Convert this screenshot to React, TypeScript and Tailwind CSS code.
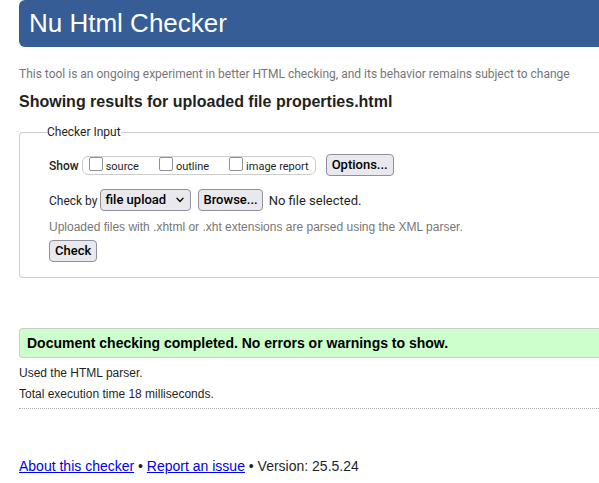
import { useRef, useState } from "react";

const control =
  "h-[22px] rounded-[4px] border border-[#8f8f9d] bg-[#e9e9ed] text-[13px] leading-5 font-medium text-black";

function ShowOption({ id, label }: { id: string; label: string }) {
  return (
    <label htmlFor={id} className="flex items-start gap-[3px] text-[11px]">
      <input
        id={id}
        type="checkbox"
        className="size-[14px] appearance-none rounded-[2px] border border-[#8f8f9d] bg-white checked:bg-[#0060df]"
      />
      <span className="pt-[1px]">{label}</span>
    </label>
  );
}

export default function App() {
  const fileInput = useRef<HTMLInputElement>(null);
  const [fileName, setFileName] = useState("No file selected.");

  return (
    <div className="bg-white pl-[19px] font-['Liberation_Sans',Arial,sans-serif] text-[#1f1f1f]">
      <header className="rounded-l-md bg-[#365d95] pt-[5px] pb-[6px] pl-[10px]">
        <h1 className="text-[26px] leading-9 text-white">Nu Html Checker</h1>
      </header>

      <p className="mt-[18px] font-[Roboto,sans-serif] text-[12px] leading-[18px] whitespace-nowrap text-[#767676]">
        This tool is an ongoing experiment in better HTML checking, and its behavior remains subject to change
      </p>
      <h2 className="mt-[9px] text-[16px] leading-5 font-bold">Showing results for uploaded file properties.html</h2>

      <form className="mt-[11px]" onSubmit={(event) => event.preventDefault()}>
        <fieldset className="rounded-l-[4px] border border-r-0 border-[#ccc] pb-[15px] pl-[29px] font-[Roboto,sans-serif] text-[12px] leading-[18px]">
          <legend className="-ml-[2px]">Checker Input</legend>

          <div className="mt-[13px] flex items-center">
            <span className="pt-[2px] font-medium">Show</span>
            <div className="ml-[3px] flex h-[19px] items-start gap-5 rounded-[6px] border border-[#ccc] px-[6px]">
              <ShowOption id="show-source" label="source" />
              <ShowOption id="show-outline" label="outline" />
              <ShowOption id="show-image-report" label="image report" />
            </div>
            <button type="button" className={`${control} ml-[10px] px-[5px]`}>
              Options...
            </button>
          </div>

          <div className="mt-[13px] flex items-center">
            <label htmlFor="check-by" className="pt-[2px]">
              Check by
            </label>
            <div className="relative ml-[3px]">
              <select id="check-by" className={`${control} block w-[91px] appearance-none pl-1`}>
                <option>file upload</option>
                <option>address</option>
                <option>text input</option>
              </select>
              <svg
                viewBox="0 0 8 6"
                className="pointer-events-none absolute top-2 right-[7px] h-[6px] w-2"
                fill="none"
                stroke="#111"
                strokeWidth="1.4"
                strokeLinecap="round"
                strokeLinejoin="round"
                aria-hidden="true"
              >
                <path d="M1 1.2 4 4.4 7 1.2" />
              </svg>
            </div>
            <button
              type="button"
              className={`${control} ml-[7px] px-1`}
              onClick={() => fileInput.current?.click()}
            >
              Browse...
            </button>
            <input
              ref={fileInput}
              type="file"
              aria-label="File to check"
              className="hidden"
              onChange={(event) => setFileName(event.target.files?.[0]?.name ?? "No file selected.")}
            />
            <span className="ml-[6px] pt-[2px] text-[13px]">{fileName}</span>
          </div>

          <p className="mt-[7px] font-['Liberation_Sans',Arial,sans-serif] text-[12px] text-[#767676]">
            Uploaded files with .xhtml or .xht extensions are parsed using the XML parser.
          </p>
          <button type="submit" className={`${control} mt-1 block px-[5px]`}>
            Check
          </button>
        </fieldset>
      </form>

      <p className="mt-[50px] rounded-l-[4px] border border-r-0 border-[#ccc] bg-[#ccffcc] px-[7px] py-1 text-[14px] leading-5 font-bold text-black">
        Document checking completed. No errors or warnings to show.
      </p>
      <div className="border-b border-dotted border-[#aaa] pt-[6px] pb-[5px] text-[12px] leading-[18px]">
        <p>Used the HTML parser.</p>
        <p className="mt-[3px]">Total execution time 18 milliseconds.</p>
      </div>

      <footer className="mt-[47px] pb-[7px] text-[14px] leading-5">
        <a href="#about" className="text-[#0000ee] underline">
          About this checker
        </a>
        {" • "}
        <a href="#issue" className="text-[#0000ee] underline">
          Report an issue
        </a>
        {" • Version: 25.5.24"}
      </footer>
    </div>
  );
}
